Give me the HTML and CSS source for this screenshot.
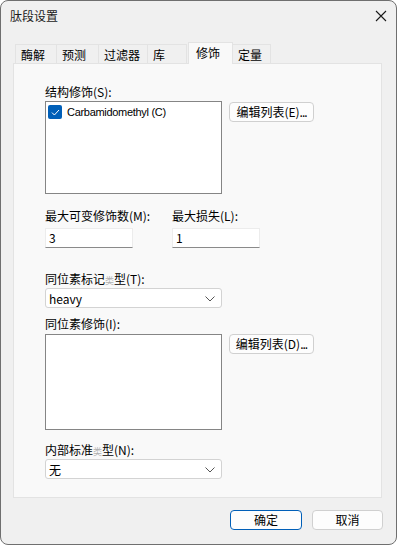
FILE: index.html
```html
<!DOCTYPE html>
<html>
<head>
<meta charset="utf-8">
<title>肽段设置</title>
<link rel="stylesheet" href="styles.css">
</head>
<body>

<div id='janela'>

  <div id='titulo'>
    <span>肽段设置</span>
    <svg class='fechar' width="12" height="12" viewBox="0 0 12 12"><path d="M1 1L11 11M11 1L1 11" stroke="#1a1a1a" stroke-width="1.1" fill="none"/></svg>
  </div>

  <div id='abas'>
    <div class='aba aba1'>酶解</div>
    <div class='aba aba2'>预测</div>
    <div class='aba aba3'>过滤器</div>
    <div class='aba aba4'>库</div>
    <div class='aba ativa'>修饰</div>
    <div class='aba aba6'>定量</div>
  </div>

  <div id='painel'>

    <div class='rotulo'>结构修饰(S):</div>
    <div class='linha'>
      <div class='lista lista1'>
        <div class='item'>
          <span class='caixa'><svg width="9" height="9" viewBox="0 0 9 9"><path d="M1 4.6L3.4 7L8 2" stroke="#fff" stroke-width="1" fill="none"/></svg></span>
          Carbamidomethyl (C)
        </div>
      </div>
      <div class='botao editar'>编辑列表(E)<span class='pontos'>...</span></div>
    </div>

    <div class='linha duplas'>
      <div class='campo'>
        <div class='rotulo'>最大可变修饰数(M):</div>
        <div class='entrada'>3</div>
      </div>
      <div class='campo'>
        <div class='rotulo'>最大损失(L):</div>
        <div class='entrada'>1</div>
      </div>
    </div>

    <div class='rotulo r3'>同位素标记<span class='fraco'>类</span>型(T):</div>
    <div class='selecao'>heavy<svg width="10" height="6" viewBox="0 0 10 6"><path d="M0.5 0.5L5 5L9.5 0.5" stroke="#555" stroke-width="1" fill="none"/></svg></div>

    <div class='rotulo r4'>同位素修饰(I):</div>
    <div class='linha'>
      <div class='lista lista2'></div>
      <div class='botao editar'>编辑列表(D)<span class='pontos'>...</span></div>
    </div>

    <div class='rotulo r5'>内部标准<span class='fraco'>类</span>型(N):</div>
    <div class='selecao'>无<svg width="10" height="6" viewBox="0 0 10 6"><path d="M0.5 0.5L5 5L9.5 0.5" stroke="#555" stroke-width="1" fill="none"/></svg></div>

  </div>

  <div id='rodape'>
    <div class='botao ok'>确定</div>
    <div class='botao'>取消</div>
  </div>

</div>

</body>
</html>
```
FILE: styles.css
```css
*{ box-sizing: border-box; font-family: "Noto Sans CJK SC", "Liberation Sans", sans-serif; }
html, body{ margin: 0; padding: 0; background: #ffffff; }

#janela{ width: 397px; height: 545px; background: #f0f0f0; border: 1px solid #6f6f6f; border-radius: 8px;
         display: flex; flex-direction: column; overflow: hidden; }

#titulo{ height: 29px; display: flex; align-items: center; justify-content: space-between;
         padding: 0 9px 0 9px; font-size: 12px; color: #1a1a1a; }

#abas{ display: flex; align-items: flex-end; height: 34px; padding-left: 14px; margin-bottom: -1px; position: relative; z-index: 1; }
.aba{ height: 19px; font-size: 12px; line-height: 19px; padding-left: 5px; color: #000;
      border: 1px solid #e3e3e3; border-bottom: none; border-right: none; background: #f0f0f0; margin-bottom: 1px; }
.aba1{ width: 41px; }
.aba2{ width: 42px; }
.aba3{ width: 49px; }
.aba4{ width: 40px; border-right: 1px solid #e3e3e3; }
.ativa{ width: 45px; height: 22px; line-height: 19px; margin-left: 1px; margin-bottom: 0; padding-left: 7px;
        background: #f9f9f9; border: 1px solid #e3e3e3; border-bottom: none; }
.aba6{ width: 38px; border-left: none; border-right: 1px solid #e3e3e3; }

#painel{ margin: 0 14px 0 12px; height: 435px; background: #f9f9f9; border: 1px solid #e3e3e3;
         padding: 20px 0 0 31px; display: flex; flex-direction: column; }

.rotulo{ font-size: 12px; line-height: 16px; height: 16px; color: #000; }
.fraco{ color: #b0b0b0; font-size: 9px; }

.linha{ display: flex; align-items: flex-start; }
.lista{ width: 177px; background: #fff; border: 1px solid #858585; margin-top: 1px; }
.lista1{ height: 93px; }
.lista2{ height: 96px; margin-top: 2px; }
.item{ display: flex; align-items: center; font-size: 11px; height: 16px; margin: 2px 0 0 2px; color: #000;
       font-family: "Liberation Sans", sans-serif; letter-spacing: -0.3px; }
.caixa{ width: 14px; height: 14px; background: #005fb8; border-radius: 2px; margin-right: 5px;
        display: flex; align-items: center; justify-content: center; }

.botao{ height: 20px; border: 1px solid #d0d0d0; border-radius: 4px; background: #fdfdfd;
        font-size: 12px; line-height: 18px; text-align: center; color: #000; }
.pontos{ letter-spacing: -1px; }
.editar{ width: 85px; margin: 2px 0 0 7px; }
.lista2 + .editar{ margin-top: 2px; }

.duplas{ margin-top: 14px; }
.campo{ width: 127px; }
.campo .rotulo{ height: 20px; }
.entrada{ width: 88px; height: 20px; background: #fff; border: 1px solid #ececec; border-bottom: 1px solid #8a8a8a;
          font-size: 12px; line-height: 18px; padding-left: 3px; }

.r3{ margin-top: 23px; }
.r4{ margin-top: 8px; }
.r5{ margin-top: 12px; }

.selecao{ width: 177px; height: 20px; background: #fff; border: 1px solid #d3d3d3; border-radius: 3px; margin-top: 1px;
          display: flex; align-items: center; justify-content: space-between; padding: 0 6px 0 3px;
          font-size: 12px; color: #000; }
.selecao svg{ margin-top: 1px; }

#rodape{ display: flex; justify-content: flex-end; gap: 10px; padding: 12px 13px 0 0; }
#rodape .botao{ width: 71px; }
#rodape .ok{ width: 72px; border: 1px solid #005fb8; }
```
